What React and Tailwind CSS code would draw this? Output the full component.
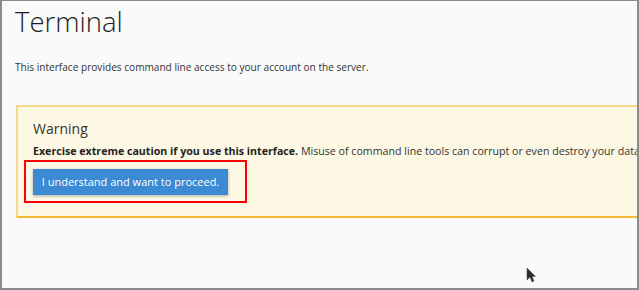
export default function App() {
  return (
    <div className="relative w-[639px] h-[290px] overflow-hidden bg-[#fafafa] border-t border-l-2 border-r-2 border-b-2 border-[#8a8a8a] font-['Open_Sans',sans-serif] text-[#333]">
      <div className="pl-[13px]">
        <h1 className="mt-[3px] h-[36px] text-[27.5px] leading-[36px] font-light text-[#1d1d1d]">Terminal</h1>
        <p className="mt-[19px] h-[16px] text-[10.1px] leading-[16px] whitespace-nowrap">
          This interface provides command line access to your account on the server.
        </p>
      </div>

      <div className="mt-[30px] ml-[14px] w-[800px] bg-[#fdf8e3] border-t-2 border-l-2 border-[#f6d78e] border-b-2 border-b-[#f2bb33] pl-[15px] pt-[12px] pb-[13px]">
        <h2 className="h-[20px] text-[14px] leading-[20px] text-[#333]">Warning</h2>
        <p className="mt-[4px] h-[16px] text-[10.65px] leading-[16px] whitespace-nowrap">
          <strong className="font-bold text-[#222]">Exercise extreme caution if you use this interface.</strong>{' '}
          Misuse of command line tools can corrupt or even destroy your data. Do not proceed unless you know what you are doing.
        </p>
        <div className="mt-[1px] ml-[-9px] inline-block border-2 border-[#ff0000] pl-[7px] pr-[17px] pt-[6px] pb-[6px]">
          <button className="h-[26px] w-[195px] bg-[#3b8ad3] text-white text-[11px] leading-[26px] shadow-[0_1px_3px_rgba(0,0,0,0.3)]">
            I understand and want to proceed.
          </button>
        </div>
      </div>

      <svg className="absolute left-[524px] top-[266px]" width="10" height="16" viewBox="0 0 10 16">
        <path d="M1 1 L1 13 L4 10 L6 15 L8 14 L6 9.5 L9.5 9.5 Z" fill="#2b2b2b" stroke="#555" strokeWidth="0.6" />
      </svg>
    </div>
  )
}
